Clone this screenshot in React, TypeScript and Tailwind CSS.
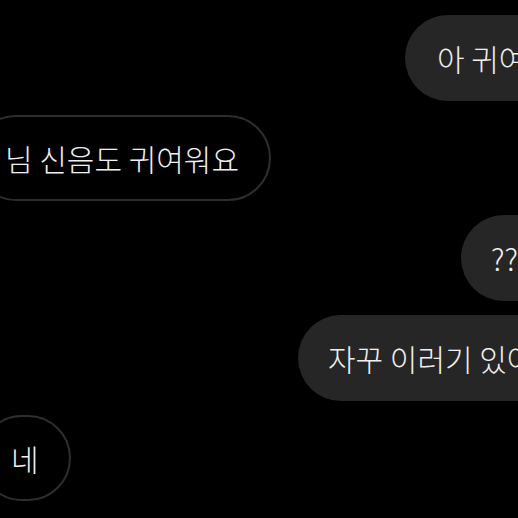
import React from "react";

const font = { fontFamily: '"Noto Sans CJK KR", "Noto Sans", sans-serif' };

export default function App() {
  return (
    <div
      className="w-[518px] h-[518px] bg-black overflow-hidden text-[#f0f0f0]"
      style={font}
    >
      <div className="flex flex-col gap-[14px] pt-[15px] w-[900px]">
        <div className="ml-[405px] self-start h-[86px] rounded-full bg-[#262626] flex items-center px-[32px] text-[30px] font-light whitespace-nowrap">
          아 귀여워
        </div>
        <div className="ml-[-27px] self-start h-[86px] rounded-full border-2 border-[#2e2e2e] flex items-center px-[30px] text-[30px] font-light whitespace-nowrap">
          님 신음도 귀여워요
        </div>
        <div className="ml-[461px] self-start h-[86px] rounded-full bg-[#262626] flex items-center px-[30px] text-[30px] font-light whitespace-nowrap">
          ???
        </div>
        <div className="ml-[298px] self-start h-[86px] rounded-full bg-[#262626] flex items-center px-[30px] text-[30px] font-light whitespace-nowrap">
          자꾸 이러기 있어요
        </div>
        <div className="ml-[-21px] self-start h-[86px] rounded-full border-2 border-[#2e2e2e] flex items-center px-[30px] text-[30px] font-light whitespace-nowrap">
          네
        </div>
      </div>
    </div>
  );
}
